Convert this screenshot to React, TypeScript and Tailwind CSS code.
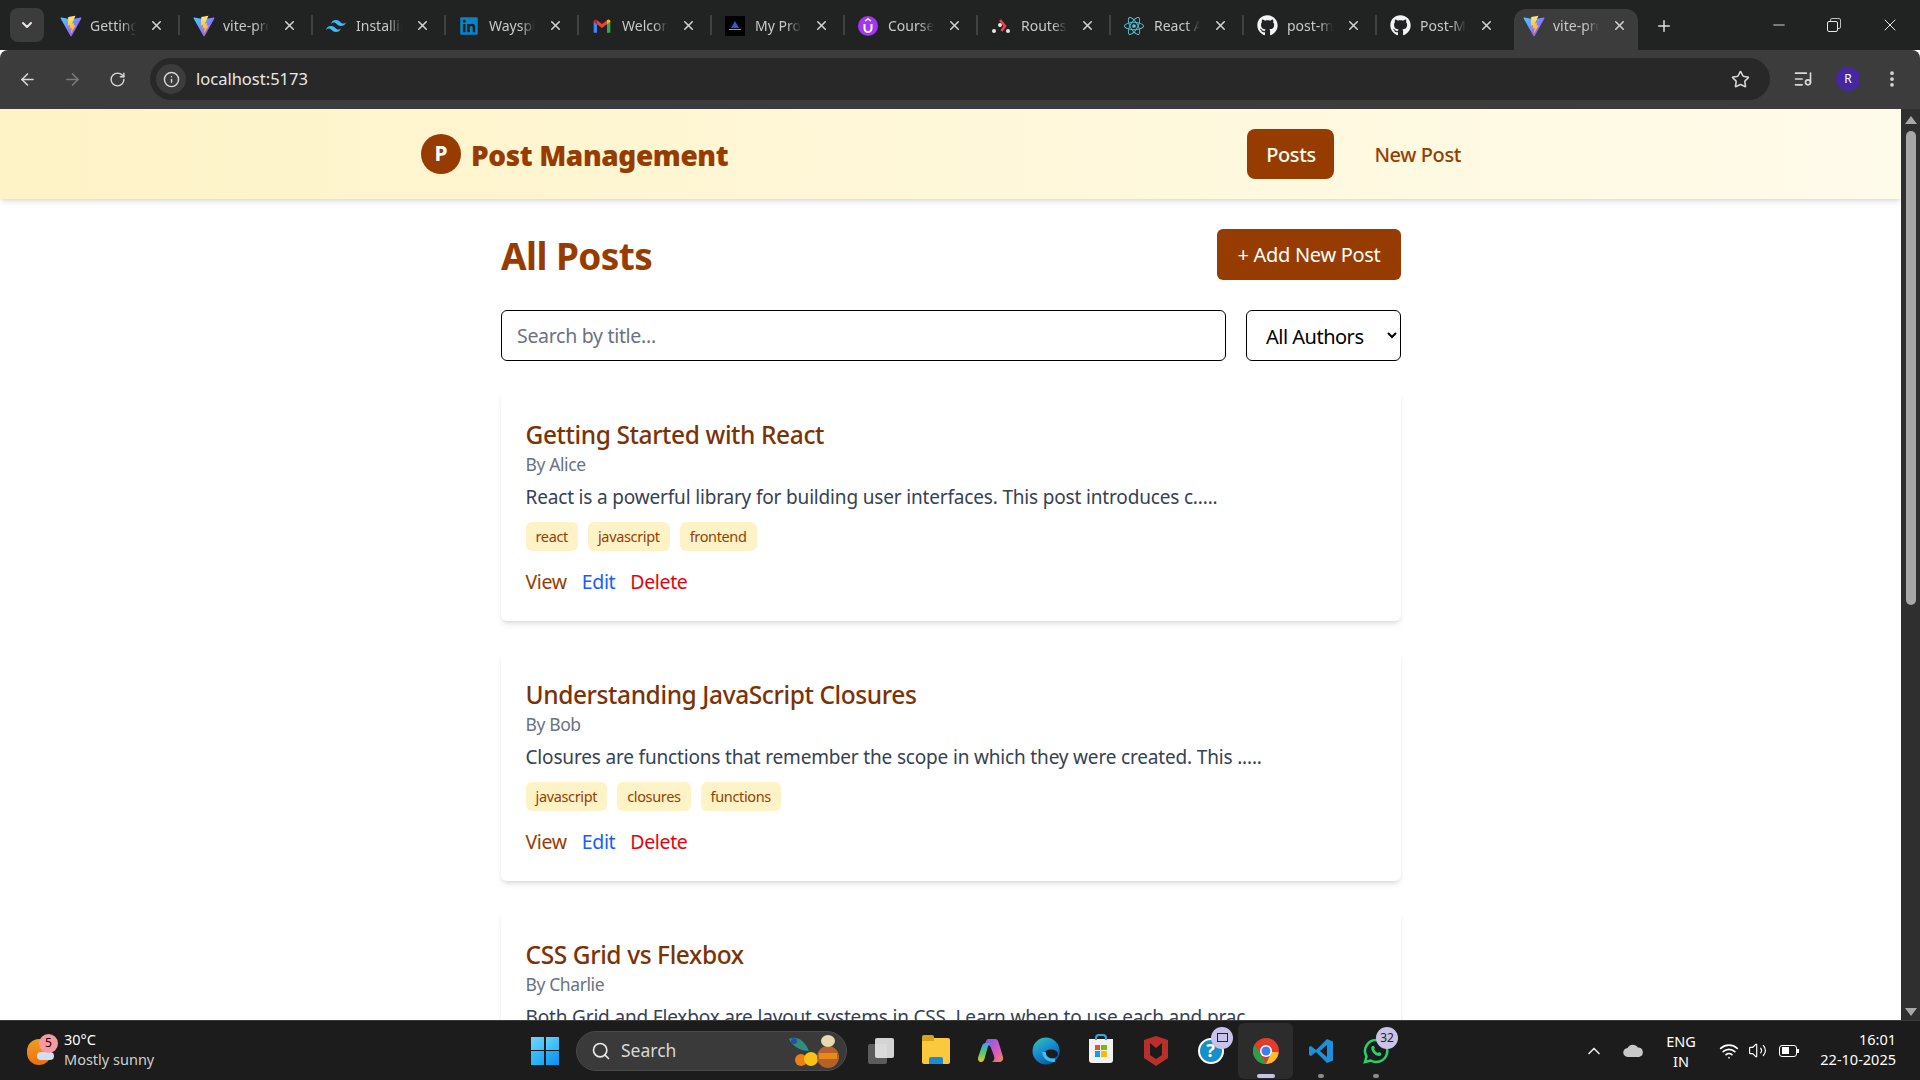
import { ChevronDown, X, Plus, ArrowLeft, ArrowRight, RotateCw, Info, Star, Minus, EllipsisVertical, ChevronUp, Search, Wifi, Volume2, ListMusic } from "lucide-react";
import { FaGithub, FaLinkedin } from "react-icons/fa";
import { SiTailwindcss, SiReact } from "react-icons/si";

const sans = "font-['Noto_Sans','Open_Sans',sans-serif]";

const ViteIcon = () => (
    <svg width="22" height="22" viewBox="0 0 32 32">
        <defs>
            <linearGradient id="vite-a" x1="0" y1="0" x2="1" y2="1">
                <stop offset="0" stopColor="#41d1ff" />
                <stop offset="1" stopColor="#bd34fe" />
            </linearGradient>
            <linearGradient id="vite-b" x1="0" y1="0" x2="0" y2="1">
                <stop offset="0" stopColor="#ffea83" />
                <stop offset="1" stopColor="#ffa800" />
            </linearGradient>
        </defs>
        <path d="M31 5 17 30.5c-.4.7-1.4.7-1.8 0L1 5c-.4-.7.2-1.6 1-1.4l14 2.5 14-2.5c.8-.2 1.4.7 1 1.4Z" fill="url(#vite-a)" />
        <path d="M22.5 1 12 3l-.7 12.5 3.5-.8-.9 5 3-.8-1.4 7.6c0 .4.5.5.7.2L23 15l-3.5.7 1-4-3.3.9L22.5 1Z" fill="url(#vite-b)" />
    </svg>
);

const GmailIcon = () => (
    <svg width="20" height="20" viewBox="0 0 24 24">
        <path d="M2 6v14h4V10Z" fill="#4285f4" />
        <path d="M22 6v14h-4V10Z" fill="#34a853" />
        <path d="M6 10V5l6 4.5L18 5v5l-6 4.5Z" fill="#ea4335" />
        <path d="M2 6.5C2 4.5 4.300 3.500 6 5v5L2 7Z" fill="#c5221f" />
        <path d="M22 6.500C22 4.500 19.700 3.500 18 5v5l4-3Z" fill="#fbbc04" />
    </svg>
);

const ProjectIcon = () => (
    <div className="flex h-5 w-5 flex-col items-center justify-center bg-black">
        <div className="h-0 w-0 border-x-[4px] border-b-[7px] border-x-transparent border-b-[#2b5bd7]" />
        <div className="mt-px h-px w-3 bg-gray-400" />
    </div>
);

const UdemyIcon = () => (
    <div className="flex h-5 w-5 items-center justify-center rounded-full bg-[#a435f0]">
        <svg width="12" height="15" viewBox="0 0 12 15" fill="none" stroke="white" strokeWidth="2">
            <path d="M2.500 6v4.500a3.500 3.500 0 0 0 7 0V6" />
            <path d="M3 3 6 1l3 2" strokeWidth="1.500" />
        </svg>
    </div>
);

const RoutesIcon = () => (
    <svg width="20" height="20" viewBox="0 0 20 20">
        <circle cx="3" cy="15" r="2" fill="#e5e7eb" />
        <circle cx="17" cy="15" r="2" fill="#e5e7eb" />
        <circle cx="9" cy="9" r="2" fill="#e5e7eb" />
        <path d="M9 4l5 6-3.500 5" fill="none" stroke="#f44250" strokeWidth="2.500" />
    </svg>
);

const tabs = [
    { title: "Getting", icon: <ViteIcon /> },
    { title: "vite-project", icon: <ViteIcon /> },
    { title: "Installing", icon: <SiTailwindcss size={20} color="#38bdf8" /> },
    { title: "Wayspire", icon: <FaLinkedin size={20} color="#0a84c6" /> },
    { title: "Welcome", icon: <GmailIcon /> },
    { title: "My Project", icon: <ProjectIcon /> },
    { title: "Courses", icon: <UdemyIcon /> },
    { title: "Routes", icon: <RoutesIcon /> },
    { title: "React Apps", icon: <SiReact size={20} color="#58c4dc" /> },
    { title: "post-management", icon: <FaGithub size={21} color="#f3f4f6" /> },
    { title: "Post-Management", icon: <FaGithub size={21} color="#f3f4f6" /> },
    { title: "vite-project", icon: <ViteIcon />, active: true },
];

const posts = [
    {
        title: "Getting Started with React",
        author: "Alice",
        body: "React is a powerful library for building user interfaces. This post introduces c.....",
        tags: ["react", "javascript", "frontend"],
    },
    {
        title: "Understanding JavaScript Closures",
        author: "Bob",
        body: "Closures are functions that remember the scope in which they were created. This .....",
        tags: ["javascript", "closures", "functions"],
    },
    {
        title: "CSS Grid vs Flexbox",
        author: "Charlie",
        body: "Both Grid and Flexbox are layout systems in CSS. Learn when to use each and prac.....",
        tags: ["css", "grid", "flexbox"],
    },
];

function TabStrip() {
    return (
        <div className="flex h-[50px] shrink-0 items-end bg-[#202322]">
            <div className="mb-[8px] ml-[10px] mr-[3px] flex h-[34px] w-[34px] items-center justify-center rounded-lg bg-[#3c3c3c] text-[#e8e8e8]">
                <ChevronDown size={16} strokeWidth={3} />
            </div>
            {tabs.map((tab, i) => (
                <div
                    key={i}
                    className={
                        tab.active
                            ? "relative ml-[4px] flex h-[41px] w-[124px] shrink-0 items-center rounded-t-xl bg-[#3c3c3c] pb-[8px] pl-[9px]"
                            : "relative flex h-[41px] w-[133px] shrink-0 items-center pb-[8px] pl-[13px]"
                    }
                >
                    <div className="flex w-[30px] shrink-0 items-center">{tab.icon}</div>
                    <div className="w-[46px] overflow-hidden whitespace-nowrap text-[14px] text-[#c8c8c8] [mask-image:linear-gradient(to_right,black_70%,transparent)]">
                        {tab.title}
                    </div>
                    <X size={15} strokeWidth={2.500} className="ml-[13px] shrink-0 text-[#d0d0d0]" />
                    {!tab.active && i !== 10 && <div className="absolute right-0 top-[6px] h-[20px] w-[2px] bg-[#3f4241]" />}
                </div>
            ))}
            <div className="mb-[15px] ml-[17px] text-[#e0e0e0]">
                <Plus size={18} strokeWidth={2} />
            </div>
            <div className="mb-[15px] ml-[97px] flex items-center gap-[39px] text-[#e8e8e8]">
                <Minus size={18} strokeWidth={1.200} />
                <div className="relative h-[14px] w-[14px]">
                    <div className="absolute left-[3px] top-0 h-[11px] w-[11px] rounded-[2px] border border-[#bdbdbd]" />
                    <div className="absolute bottom-0 left-0 h-[11px] w-[11px] rounded-[2px] border border-[#e8e8e8] bg-[#202322]" />
                </div>
                <X size={20} strokeWidth={1.200} />
            </div>
        </div>
    );
}

function Toolbar() {
    return (
        <div className="flex h-[59px] shrink-0 items-center rounded-t-lg bg-[#3c3c3c] pb-px text-[#d8d8d8]">
            <ArrowLeft size={19} className="ml-[18px]" />
            <ArrowRight size={19} className="ml-[26px] text-[#7b7b7b]" />
            <RotateCw size={17} className="ml-[27px]" />
            <div className="ml-[24px] flex h-[42px] w-[1620px] items-center rounded-full bg-[#282828] pl-[6px]">
                <div className="flex h-[30px] w-[30px] items-center justify-center rounded-full bg-[#3c3c3c]">
                    <Info size={17} />
                </div>
                <span className="ml-[10px] text-[16.500px] text-[#e8e8e8]">localhost:5173</span>
                <Star size={19} className="ml-auto mr-[20px]" />
            </div>
            <ListMusic size={20} className="ml-[23px]" />
            <div className="ml-[23px] flex h-[24px] w-[24px] items-center justify-center rounded-full bg-[#4527a0] text-[12px] text-white">R</div>
            <EllipsisVertical size={20} strokeWidth={2.500} className="ml-[22px]" />
        </div>
    );
}

function PostCard({ title, author, body, tags }: { title: string; author: string; body: string; tags: string[] }) {
    return (
        <div className="mb-[30px] rounded-md bg-white pb-[25px] pl-[24.500px] pr-[25px] pt-[27px] shadow-md">
            <h2 className="text-[24.500px] font-medium leading-[34px] tracking-[-0.4px] text-amber-900">{title}</h2>
            <p className="text-[17.500px] leading-[24px] tracking-[-0.4px] text-gray-500">By {author}</p>
            <p className="mt-[8px] text-[19px] leading-[27px] tracking-[-0.17px] text-gray-700">{body}</p>
            <div className="mt-[11px] flex gap-[10px]">
                {tags.map((tag) => (
                    <span key={tag} className="rounded-md bg-amber-100 px-[10px] py-[4px] text-[14.500px] leading-[21px] tracking-[-0.35px] text-amber-800">
                        {tag}
                    </span>
                ))}
            </div>
            <div className="mt-[17px] flex gap-[15px] text-[19.500px] leading-[28px] tracking-[-0.35px]">
                <a className="text-amber-800">View</a>
                <a className="text-blue-600">Edit</a>
                <a className="text-red-600">Delete</a>
            </div>
        </div>
    );
}

function Page() {
    return (
        <div className="relative flex min-h-0 flex-1 overflow-hidden bg-white">
            <div className="min-w-0 flex-1">
                <header className="flex h-[90px] items-center bg-gradient-to-r from-amber-100 to-amber-50 pl-[421px] pr-[440px] shadow-md">
                    <div className="flex h-[40px] w-[40px] items-center justify-center rounded-full bg-amber-800 text-[21px] font-bold text-white">P</div>
                    <span className="ml-[10px] pt-[2px] text-[28px] font-black tracking-[-0.4px] text-amber-800">Post Management</span>
                    <nav className="ml-auto flex items-center">
                        <a className="flex h-[50px] w-[87px] items-center justify-center rounded-lg bg-amber-800 pt-[2px] text-[20px] font-medium tracking-[-0.4px] text-amber-50">Posts</a>
                        <a className="ml-[40px] pt-[2px] text-[20px] font-medium tracking-[-0.4px] text-amber-800">New Post</a>
                    </nav>
                </header>
                <main className="ml-[501px] mt-[30px] w-[900px]">
                    <div className="flex items-start justify-between">
                        <h1 className="h-[51px] pt-[2px] text-[37px] font-bold leading-[50px] tracking-[-0.6px] text-amber-800">All Posts</h1>
                        <button className="h-[51px] w-[184px] rounded-md bg-amber-800 pt-[1px] text-[20px] tracking-[-0.3px] text-white">+ Add New Post</button>
                    </div>
                    <div className="mt-[30px] flex gap-[20px]">
                        <input
                            placeholder="Search by title..."
                            className="h-[51px] flex-1 rounded-md border border-black px-[15px] text-[19.500px] tracking-[-0.3px] placeholder:text-gray-500"
                        />
                        <select className="h-[51px] w-[155px] rounded-md border border-black bg-white px-[15px] pt-[1px] text-[20px] tracking-[-0.5px] text-black">
                            <option>All Authors</option>
                            <option>Alice</option>
                            <option>Bob</option>
                            <option>Charlie</option>
                        </select>
                    </div>
                    <div className="mt-[30px]">
                        {posts.map((post) => (
                            <PostCard key={post.title} {...post} />
                        ))}
                    </div>
                </main>
            </div>
            <div className="flex w-[19px] shrink-0 flex-col items-center bg-[#2f2f2f]">
                <div className="mt-[7px] h-0 w-0 border-x-[6px] border-b-[8px] border-x-transparent border-b-[#a8a8a8]" />
                <div className="mt-[7px] h-[474px] w-[10px] rounded-full bg-[#a8a8a8]" />
                <div className="mb-[4px] mt-auto h-0 w-0 border-x-[6px] border-t-[8px] border-x-transparent border-t-[#a8a8a8]" />
            </div>
        </div>
    );
}

const TaskIcon = ({ children, active, dot, badge }: { children: React.ReactNode; active?: boolean; dot?: boolean; badge?: React.ReactNode }) => (
    <div className={active ? "relative flex h-[56px] w-[55px] items-center justify-center rounded-md bg-[#2c2c2c]" : "relative flex h-[56px] w-[55px] items-center justify-center"}>
        {children}
        {badge && (
            <div className="absolute right-[5px] top-[4px] flex h-[22px] min-w-[22px] items-center justify-center rounded-full bg-[#c9c3ea] px-[2px] text-[12px] text-[#222]">
                {badge}
            </div>
        )}
        {active && <div className="absolute bottom-[1px] h-[4px] w-[18px] rounded-full bg-[#c9c3ea]" />}
        {dot && <div className="absolute bottom-[1px] h-[4px] w-[6px] rounded-full bg-[#8a8a8a]" />}
    </div>
);

function Taskbar() {
    return (
        <div className="flex h-[60px] shrink-0 items-center border-t border-[#3a3a3a] bg-[#1c1c1c] text-white">
            <div className="relative ml-[27px] h-[30px] w-[30px]">
                <div className="absolute left-0 top-[3px] h-[26px] w-[24px] rounded-full bg-gradient-to-b from-[#e8a020] to-[#ef6c14]" />
                <div className="absolute left-[10px] top-[16px] h-[8px] w-[17px] rounded-full bg-[#cfe0f5]" />
                <div className="absolute left-[12px] top-[-2px] flex h-[19px] w-[19px] items-center justify-center rounded-full bg-[#f79aa0] text-[12px] text-black">5</div>
            </div>
            <div className="mb-[4px] ml-[7px] w-[110px] text-[14.500px] leading-[20px]">
                <div>30°C</div>
                <div className="text-[#cfcfcf]">Mostly sunny</div>
            </div>
            <div className="ml-[357px] grid h-[28px] w-[28px] grid-cols-2 gap-[1.500px]">
                <div className="bg-gradient-to-br from-[#6fd6fb] to-[#3cbef5]" />
                <div className="bg-gradient-to-br from-[#5ed3fb] to-[#2fb3f5]" />
                <div className="bg-gradient-to-br from-[#3ec0f7] to-[#1fa5f2]" />
                <div className="bg-gradient-to-br from-[#2bb0f5] to-[#0f8fee]" />
            </div>
            <div className="ml-[17px] flex h-[40px] w-[271px] items-center rounded-full border border-[#4a4a4a] bg-[#3a3a3a] pl-[14px]">
                <Search size={20} strokeWidth={2} className="text-[#e8e8e8]" />
                <span className="ml-[10px] text-[17.500px] text-[#d8d8d8]">Search</span>
                <svg width="56" height="36" viewBox="0 0 56 36" className="ml-auto mr-[3px]">
                    <path d="M2 6c8-4 16 2 20 12C14 18 6 14 2 6Z" fill="#2f8f7f" />
                    <circle cx="7" cy="8" r="3" fill="#2a4fa0" />
                    <circle cx="14" cy="27" r="6" fill="#f07f13" />
                    <circle cx="24" cy="26" r="7" fill="#f7c212" />
                    <ellipse cx="41" cy="24" rx="11" ry="11" fill="#b8602a" />
                    <rect x="32" y="20" width="18" height="6" fill="#e88a1a" />
                    <ellipse cx="41" cy="8" rx="7" ry="6" fill="#e8d9b0" />
                </svg>
            </div>
            <div className="ml-[6px] flex items-center">
                <TaskIcon>
                    <div className="relative h-[26px] w-[26px]">
                        <div className="absolute bottom-0 left-0 h-[20px] w-[19px] rounded-[2px] bg-[#5c5c5c]" />
                        <div className="absolute right-0 top-0 h-[20px] w-[19px] rounded-[2px] bg-[#e8e8e8] opacity-90" />
                    </div>
                </TaskIcon>
                <TaskIcon>
                    <div className="relative h-[26px] w-[28px] rounded-[2px] bg-[#fbc93d]">
                        <div className="absolute -top-[3px] left-0 h-[6px] w-[12px] rounded-t-[2px] bg-[#d9a21b]" />
                        <div className="absolute bottom-0 left-[7px] h-[7px] w-[14px] rounded-t-[2px] bg-[#1c88d8]" />
                    </div>
                </TaskIcon>
                <TaskIcon>
                    <svg width="28" height="28" viewBox="0 0 28 28">
                        <defs>
                            <linearGradient id="copilot-a" x1="0" y1="0" x2="0" y2="1">
                                <stop offset="0" stopColor="#35a5f0" />
                                <stop offset="0.55" stopColor="#58c96a" />
                                <stop offset="1" stopColor="#f2c230" />
                            </linearGradient>
                            <linearGradient id="copilot-b" x1="0" y1="0" x2="1" y2="1">
                                <stop offset="0" stopColor="#7a5be8" />
                                <stop offset="0.6" stopColor="#d85ac0" />
                                <stop offset="1" stopColor="#f28a4a" />
                            </linearGradient>
                        </defs>
                        <path d="M11 2h7c2 0 3 1 3.500 3L26 20c.7 2.500-1 5-3.500 5H15c2-1 3-3 2-6l-3-8c-.5-2-2-3-4-3H8c.5-3 1.500-6 3-6Z" fill="url(#copilot-b)" />
                        <path d="M9 6h5c-2 1-3 3-3.500 5L8 20c-.5 3-2 5-4 5-2.500 0-3.500-2.500-2.800-5L5 9c.5-2 2-3 4-3Z" fill="url(#copilot-a)" />
                    </svg>
                </TaskIcon>
                <TaskIcon>
                    <svg width="28" height="28" viewBox="0 0 28 28">
                        <defs>
                            <linearGradient id="edge" x1="0" y1="0" x2="0.6" y2="1">
                                <stop offset="0" stopColor="#36c9a8" />
                                <stop offset="0.5" stopColor="#1a8fd0" />
                                <stop offset="1" stopColor="#0c59a4" />
                            </linearGradient>
                        </defs>
                        <circle cx="14" cy="14" r="13.500" fill="url(#edge)" />
                        <ellipse cx="19" cy="17" rx="7" ry="4.500" fill="#1c1c1c" />
                        <path d="M12 15c0 5 4 9 11 8" fill="none" stroke="#35c1f1" strokeWidth="3.500" />
                    </svg>
                </TaskIcon>
                <TaskIcon>
                    <div className="relative flex h-[24px] w-[24px] items-center justify-center rounded-b-[3px] bg-[#f2f2f2]">
                        <div className="absolute -top-[5px] h-[6px] w-[12px] rounded-t-[4px] border-x-2 border-t-2 border-[#2fa5e8]" />
                        <div className="grid h-[12px] w-[12px] grid-cols-2 gap-px">
                            <div className="bg-[#f25022]" />
                            <div className="bg-[#7fba00]" />
                            <div className="bg-[#00a4ef]" />
                            <div className="bg-[#ffb900]" />
                        </div>
                    </div>
                </TaskIcon>
                <TaskIcon>
                    <svg width="24" height="30" viewBox="0 0 24 30">
                        <path d="M0 4 12 0l12 4v18l-12 8-12-8Z" fill="#b8302c" />
                        <path d="M6 7v12l6 4 6-4V7l-6 5Z" fill="#1c1c1c" />
                    </svg>
                </TaskIcon>
                <TaskIcon badge={<div className="h-[9px] w-[11px] border border-[#222]" />}>
                    <div className="flex h-[26px] w-[26px] items-center justify-center rounded-full border-2 border-white bg-[#1590c8] text-[18px] font-bold text-white">?</div>
                </TaskIcon>
                <TaskIcon active>
                    <svg width="26" height="26" viewBox="0 0 26 26">
                        <circle cx="13" cy="13" r="13" fill="#e33b2e" />
                        <path d="M13 26A13 13 0 0 1 1.700 6.500L8 17Z" fill="#2f9e48" />
                        <path d="M13 26 18.500 14 H25.500A13 13 0 0 1 13 26Z" fill="#f7c02d" />
                        <circle cx="13" cy="13" r="6" fill="#fff" />
                        <circle cx="13" cy="13" r="4.500" fill="#3b82f0" />
                    </svg>
                </TaskIcon>
                <TaskIcon dot>
                    <svg width="26" height="26" viewBox="0 0 26 26">
                        <path d="M19 1 8 12 3 8 1 9v8l2 1 5-4 11 11 6-2.500V3.500Z" fill="#1e8fd8" />
                        <path d="M19 7v12l-7-6Z" fill="#1c1c1c" />
                    </svg>
                </TaskIcon>
                <TaskIcon dot badge="32">
                    <svg width="26" height="26" viewBox="0 0 26 26">
                        <path d="M13 2a11 11 0 0 0-9.500 16.500L2 24l5.700-1.500A11 11 0 1 0 13 2Z" fill="none" stroke="#25d366" strokeWidth="2.500" />
                        <path d="M9 8c-1 1-1 3 0 5s4 5 7 5c2 0 3-2 2-3l-2-1-1 1c-2-1-3-2-4-4l1-1-1-2Z" fill="#25d366" />
                    </svg>
                </TaskIcon>
            </div>
            <ChevronUp size={20} strokeWidth={2} className="ml-[181px] text-[#e8e8e8]" />
            <svg width="21" height="13" viewBox="0 0 21 13" className="ml-[19px]">
                <path d="M5 13a4.500 4.500 0 0 1-.5-9A6 6 0 0 1 15 3.500a4.800 4.800 0 0 1 1 9.500Z" fill="#c8c8c8" />
            </svg>
            <div className="ml-[19px] w-[36px] text-center text-[14.500px] leading-[20px]">
                <div>ENG</div>
                <div>IN</div>
            </div>
            <Wifi size={20} className="ml-[20px]" />
            <Volume2 size={19} strokeWidth={1.500} className="ml-[9px]" />
            <div className="relative ml-[12px] flex h-[12px] w-[18px] items-center rounded-[3px] border border-white p-[1.500px]">
                <div className="h-full w-[7px] bg-white" />
                <div className="absolute -right-[3px] h-[4px] w-[2px] bg-white" />
            </div>
            <div className="mb-[4px] ml-auto mr-[24px] text-right text-[14.500px] leading-[20px]">
                <div>16:01</div>
                <div>22-10-2025</div>
            </div>
        </div>
    );
}

export default function App() {
    return (
        <div className={`flex h-screen w-full flex-col overflow-hidden ${sans}`}>
            <TabStrip />
            <Toolbar />
            <Page />
            <Taskbar />
        </div>
    );
}
